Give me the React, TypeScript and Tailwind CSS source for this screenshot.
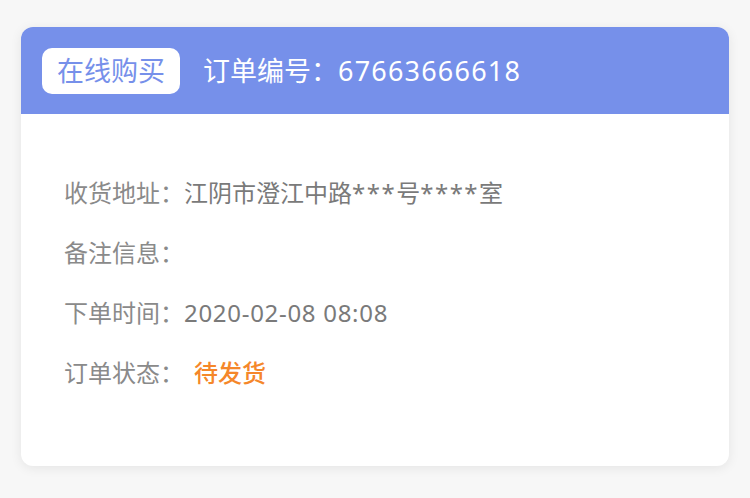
import React from 'react';

export default function App() {
  return (
    <div
      className="min-h-[498px] w-[750px] bg-[#f7f7f7] px-[21px] pt-[27px]"
      style={{ fontFamily: '"Noto Sans", "Noto Sans CJK SC", sans-serif' }}
    >
      <div className="overflow-hidden rounded-[12px] bg-white shadow-[0_2px_12px_rgba(0,0,0,0.08)]">
        <div className="flex h-[87px] items-center bg-[#7690ea] px-[21px]">
          <span className="flex h-[46px] w-[138px] items-center justify-center rounded-[10px] bg-white text-[27px] leading-none text-[#7690ea]">
            在线购买
          </span>
          <span className="ml-[23px] text-[27px] leading-none text-white">
            订单编号：<span className="tracking-[1.2px]">67663666618</span>
          </span>
        </div>
        <div className="px-[43px] pb-[63px] pt-[49px] text-[24px] leading-none text-[#8a8a8a]">
          <div className="flex h-[60px] items-center">
            <span>收货地址：</span>
            <span className="text-[#7a7a7a]">
              江阴市澄江中路<span className="tracking-[1.5px]">***</span>号<span className="tracking-[1.5px]">****</span>室
            </span>
          </div>
          <div className="flex h-[60px] items-center">
            <span>备注信息：</span>
          </div>
          <div className="flex h-[60px] items-center">
            <span>下单时间：</span>
            <span className="tracking-[0.7px] text-[#7a7a7a]">2020-02-08 08:08</span>
          </div>
          <div className="flex h-[60px] items-center">
            <span>订单状态：</span>
            <span className="ml-[10px] font-medium text-[#f5872a]">待发货</span>
          </div>
        </div>
      </div>
    </div>
  );
}
